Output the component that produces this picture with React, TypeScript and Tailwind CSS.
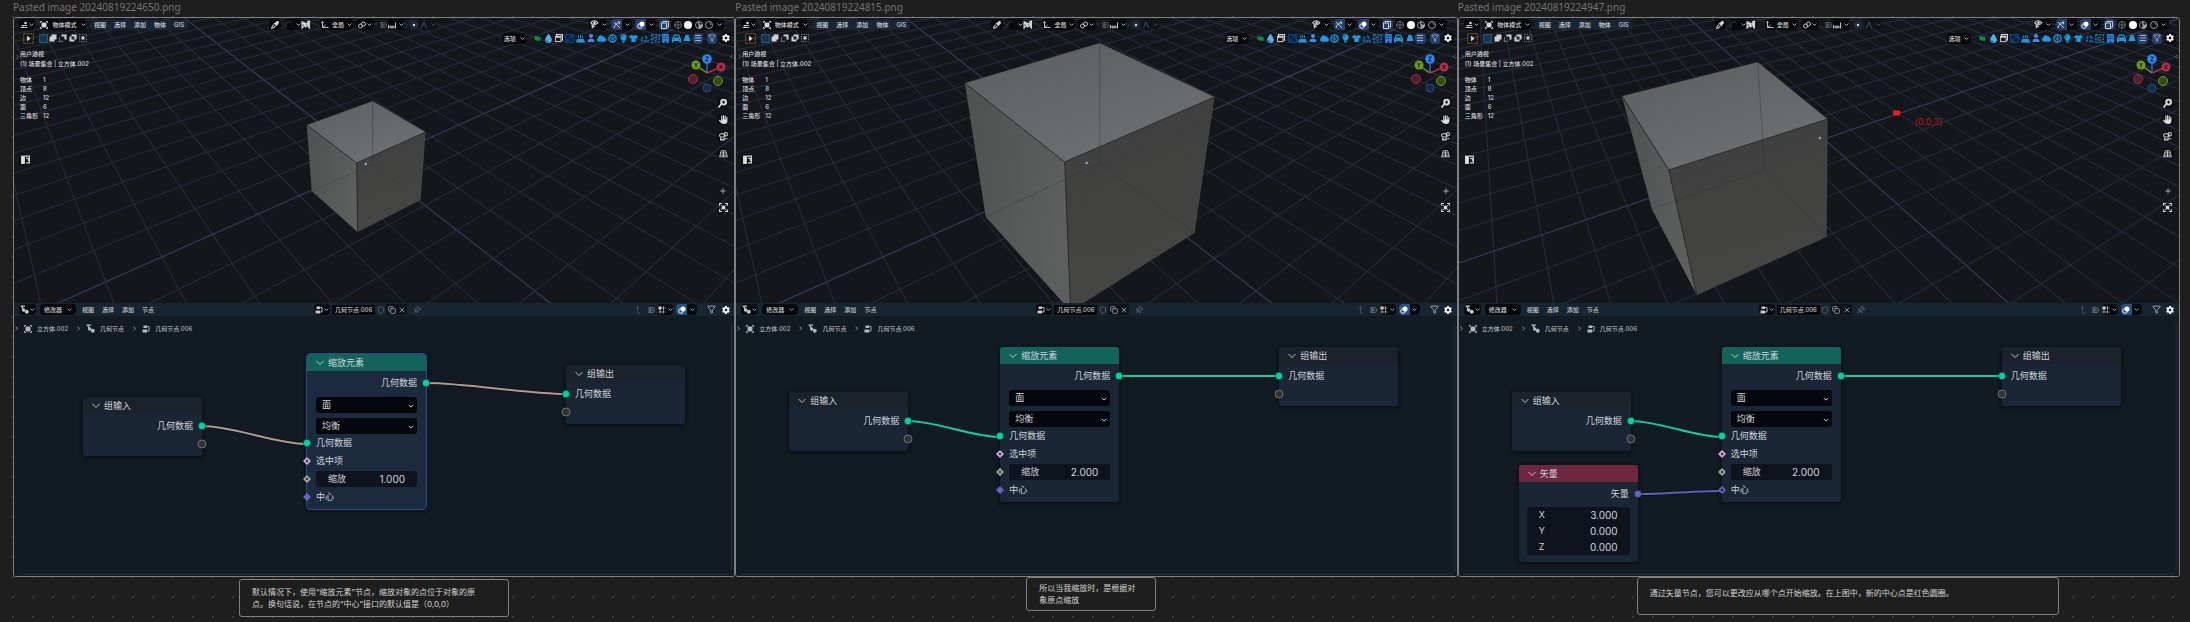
import type { ReactNode } from "react";
import {
  FaBuilding,
  FaCar,
  FaCloud,
  FaDroplet,
  FaEyeDropper,
  FaGear,
  FaHand,
  FaLightbulb,
  FaShirt,
  FaUser,
} from "react-icons/fa6";
import { Magnet, Pin, Shield, Filter, Copy, X, Plus } from "lucide-react";

type Pt = [number, number];

/* ---------- small shared pieces ---------- */

function Svg({ children, className = "size-2" }: { children: ReactNode; className?: string }) {
  return (
    <svg viewBox="0 0 16 16" className={className} fill="none" stroke="currentColor" strokeWidth="1.8" aria-hidden>
      {children}
    </svg>
  );
}

function Chevron({ className = "size-[5px]" }: { className?: string }) {
  return (
    <Svg className={className}>
      <path d="M2 5l6 6 6-6" strokeWidth="2.6" />
    </Svg>
  );
}

function Btn({ label, className = "", children }: { label: string; className?: string; children: ReactNode }) {
  return (
    <button type="button" aria-label={label} className={`flex h-[11px] shrink-0 items-center justify-center ${className}`}>
      {children}
    </button>
  );
}

const ObjectIcon = () => (
  <Svg>
    <rect x="4" y="4" width="8" height="8" fill="currentColor" />
    <path d="M1 4V1h3M12 1h3v3M15 12v3h-3M4 15H1v-3" />
  </Svg>
);
const ViewportIcon = () => (
  <Svg>
    <path d="M1 13h14M3 9h11M5 14l2-6" />
    <circle cx="11" cy="4" r="2.6" fill="currentColor" stroke="none" />
  </Svg>
);
const ModifierIcon = () => (
  <Svg className="size-[9px]">
    <path d="M1 2h8M3 2l3 6" strokeWidth="2.4" />
    <circle cx="6.500" cy="9" r="2.200" fill="currentColor" />
    <circle cx="12" cy="12" r="3.500" fill="currentColor" stroke="none" />
  </Svg>
);
const NodeTreeIcon = () => (
  <Svg>
    <rect x="3" y="1" width="7" height="5" fill="currentColor" stroke="none" />
    <rect x="1" y="9" width="9" height="6" fill="currentColor" stroke="none" />
    <path d="M10 3h4v9h-4" />
  </Svg>
);
const OverlayIcon = () => (
  <Svg>
    <circle cx="6" cy="10" r="4.600" />
    <circle cx="10" cy="6" r="5" fill="currentColor" stroke="none" />
  </Svg>
);
const GridSnapIcon = () => (
  <Svg>
    <path d="M1 4h14M1 12h14M4 1v14M11 1v14" strokeDasharray="3 1" />
    <rect x="1" y="1" width="6" height="6" fill="currentColor" stroke="none" />
  </Svg>
);

/* ---------- 3D viewport ---------- */

type Scene = {
  x: number;
  grid: { a0: number; da: number; va: number; b0: number; db: number; vb: number };
  top: Pt[];
  left: Pt[];
  right: Pt[];
  hidden: Pt;
  dot: Pt;
  marker?: Pt;
};

const HORIZON = -178;
const FLOOR = 304;
const pts = (p: Pt[]) => p.map((q) => q.join(",")).join(" ");

function SceneDrawing({ scene, id }: { scene: Scene; id: string }) {
  const { a0, da, va, b0, db, vb } = scene.grid;
  const [l, back, r, front] = scene.top;
  const steps = Array.from({ length: 49 }, (_, i) => i - 24);
  return (
    <svg
      viewBox={`${scene.x} 18 721 285`}
      preserveAspectRatio="none"
      className="absolute inset-0 size-full"
      aria-hidden
    >
      <defs>
        <linearGradient id={`top-${id}`} x1="0" y1="0" x2="0.6" y2="1">
          <stop offset="0" stopColor="#606162" />
          <stop offset="1" stopColor="#727375" />
        </linearGradient>
        <linearGradient id={`left-${id}`} x1="0" y1="0" x2="1" y2="0.3">
          <stop offset="0" stopColor="#525453" />
          <stop offset="1" stopColor="#606261" />
        </linearGradient>
        <linearGradient id={`right-${id}`} x1="0" y1="0" x2="0.3" y2="1">
          <stop offset="0" stopColor="#414141" />
          <stop offset="1" stopColor="#484847" />
        </linearGradient>
      </defs>
      <g fill="none">
        {steps.map((k) => (
          <line key={`a${k}`} x1={a0 + da * k} y1={FLOOR} x2={va} y2={HORIZON} stroke={k === 0 ? "#363c5a" : "#262b3a"} strokeWidth="1.2" />
        ))}
        {steps.map((k) => (
          <line key={`b${k}`} x1={b0 + db * k} y1={FLOOR} x2={vb} y2={HORIZON} stroke={k === 0 ? "#363c5a" : "#262b3a"} strokeWidth="1.2" />
        ))}
      </g>
      <g opacity=".97">
        <polygon points={pts(scene.left)} fill={`url(#left-${id})`} />
        <polygon points={pts(scene.right)} fill={`url(#right-${id})`} />
        <polygon points={pts(scene.top)} fill={`url(#top-${id})`} />
      </g>
      <g stroke="#2a2b2c" strokeWidth="1" fill="none">
        <path d={`M${l} L${front} L${r}`} />
        <path d={`M${front} L${scene.left[2]}`} />
        <path d={`M${l} L${back} L${r}`} opacity=".35" />
        <path d={`M${back} L${scene.hidden} L${scene.left[3]} M${scene.hidden} L${scene.right[2]}`} opacity=".35" />
      </g>
      <circle cx={scene.dot[0]} cy={scene.dot[1]} r="1.200" fill="#78b4cc" />
      {scene.marker && (
        <rect x={scene.marker[0] - 3.5} y={scene.marker[1] - 2.5} width="7" height="5" rx="1" fill="#f51a12" />
      )}
    </svg>
  );
}

function ViewportToolbar() {
  return (
    <div className="relative flex h-[13px] items-center pl-[5px] pr-[10px] text-[#d4d6d9]">
      <Btn label="编辑器类型" className="w-4 gap-px rounded-sm bg-[#07090c]">
        <ViewportIcon />
        <Chevron />
      </Btn>
      <Btn label="物体模式" className="ml-[5px] w-[46px] gap-1 rounded-sm bg-[#07090c]">
        <ObjectIcon />
        物体模式
        <Chevron />
      </Btn>
      <nav className="ml-1 flex h-[10px] items-center gap-2 rounded-sm bg-[#182634] px-1">
        {["视图", "选择", "添加", "物体", "GIS"].map((m) => (
          <button type="button" key={m}>{m}</button>
        ))}
      </nav>
      <div className="ml-[81px] flex items-center">
        <Btn label="吸管" className="w-3 rounded-sm bg-[#07090c]">
          <FaEyeDropper className="size-2" />
        </Btn>
        <Btn label="曲线" className="ml-1 w-4 gap-1 rounded-sm bg-[#07090c]">
          <Svg className="size-[7px] text-[#4c5058]"><path d="M2 15V7q0-5 5-5h7" /></Svg>
          <Chevron />
        </Btn>
        <Btn label="噪波" className="w-[9px]">
          <Svg className="size-[9px]"><path d="M2 2v12l4-4M2 3l6 9 4-3V3l3-1v12l-3-3" strokeWidth="2.200" /><path d="M2 2l6 10 3-6 4 8V2l-4 4z" fill="currentColor" stroke="none" /></Svg>
        </Btn>
        <Btn label="变换坐标系" className="ml-[10px] w-[33px] gap-[3px] rounded-sm bg-[#07090c]">
          <Svg><path d="M3 1v12h12M3 13l6-5M1 4l2-3 2 3" /></Svg>
          全局
          <Chevron />
        </Btn>
        <Btn label="轴心点" className="ml-[3px] w-[18px] gap-px rounded-sm bg-[#07090c]">
          <Svg><circle cx="5" cy="10" r="4" /><circle cx="11" cy="6" r="4" /></Svg>
          <Chevron />
        </Btn>
        <Btn label="吸附" className="ml-1 w-[10px] rounded-sm bg-[#15171d] text-[#70747f]">
          <Magnet className="size-2 rotate-45" />
        </Btn>
        <Btn label="吸附至" className="w-4 gap-[3px] bg-[#07090c]">
          <Svg><path d="M1 12h14M1 8v7M6 9v6M10 9v6M15 3v12" /></Svg>
          <Chevron />
        </Btn>
        <Btn label="衰减编辑" className="ml-1 w-[11px] rounded-sm bg-[#161d2b]">
          <Svg className="size-2 text-[#4a5270]"><circle cx="8" cy="8" r="6" strokeWidth="1" /><circle cx="8" cy="8" r="2.500" fill="#d8d8d8" stroke="none" /></Svg>
        </Btn>
        <Btn label="衰减类型" className="w-[18px] gap-[3px] rounded-sm bg-[#101318] text-[#565a63]">
          <Svg><path d="M1 14C6 14 6 2 8 2s2 12 7 12" /></Svg>
          <Chevron />
        </Btn>
      </div>
      <div className="ml-auto flex items-center">
        <Btn label="可选性" className="w-[18px] gap-[3px] rounded-sm bg-[#07090c]">
          <Svg className="size-[9px]"><path d="M1 5c4-5 9-5 13 0-3 3-6 4-8 3z" /><circle cx="8" cy="5" r="2.500" fill="currentColor" stroke="none" /><path d="M3 8l1 7 2-3 3 0z" fill="currentColor" strokeWidth="1" /></Svg>
          <Chevron />
        </Btn>
        <Btn label="显示操纵器" className="ml-1 w-[11px] rounded-l-sm bg-[#24406b]">
          <Svg><path d="M2 2l12 12M2 14C3 7 8 3 14 3M10 1l4 2-2 4" /></Svg>
        </Btn>
        <Btn label="操纵器选项" className="w-[10px] rounded-r-sm bg-[#07090c]"><Chevron /></Btn>
        <Btn label="显示叠加层" className="ml-[3px] w-[11px] rounded-l-sm bg-[#24406b] text-white"><OverlayIcon /></Btn>
        <Btn label="叠加层选项" className="w-[10px] rounded-r-sm bg-[#07090c]"><Chevron /></Btn>
        <Btn label="透视模式" className="ml-[3px] w-[11px] rounded-sm bg-[#24406b]">
          <Svg><rect x="1" y="4" width="10" height="11" /><path d="M4 4V1h11v11h-4" /></Svg>
        </Btn>
        <div className="ml-[2px] flex rounded-sm bg-[#07090c]">
          <Btn label="线框" className="w-[11px]"><Svg className="size-2 text-[#96999d]"><circle cx="8" cy="8" r="7" strokeWidth="1.300" /><path d="M1 8h14M8 1v14" strokeWidth="1.300" /></Svg></Btn>
          <Btn label="实体" className="w-[10px]"><Svg><circle cx="8" cy="8" r="8" fill="#fff" stroke="none" /></Svg></Btn>
          <Btn label="材质预览" className="w-[11px]"><Svg className="size-2 text-[#a2a4a8]"><circle cx="8" cy="8" r="7" /><path d="M8 1a7 7 0 000 7zM8 8h7a7 7 0 01-7 7z" fill="currentColor" /></Svg></Btn>
          <Btn label="渲染" className="w-[10px]"><Svg className="size-2 text-[#a2a4a8]"><circle cx="8" cy="8" r="7" /><path d="M9 4q3 1 3 4" /></Svg></Btn>
          <Btn label="着色选项" className="w-[10px]"><Chevron /></Btn>
        </div>
      </div>
    </div>
  );
}

function ToolSettings() {
  return (
    <div className="relative flex h-[14px] items-center pl-2 pr-[3px] text-[#cfd1d4]">
      <Btn label="框选工具" className="w-3 text-[#b4781c]">
        <Svg className="size-[11px]">
          <rect x="1" y="1" width="14" height="14" strokeDasharray="2 1.5" strokeWidth="1.300" />
          <path d="M6 4l5 4-5 4z" fill="#e8e8e8" stroke="none" />
        </Svg>
      </Btn>
      <div className="ml-1 flex">
        <Btn label="新建选区" className="w-[10px]"><Svg className="size-[9px] text-[#2f7fb4]"><rect x="1" y="1" width="14" height="14" fill="#173553" strokeDasharray="2 1.500" /></Svg></Btn>
        <Btn label="扩展选区" className="w-[10px]"><Svg><path d="M1 5h4V1h10v10h-4v4H1z" fill="currentColor" stroke="none" /></Svg></Btn>
        <Btn label="减去选区" className="w-[10px]"><Svg><path d="M5 1h10v10h-4V5H5z" fill="currentColor" stroke="none" /><path d="M1 7v8h8" strokeDasharray="2 2" /></Svg></Btn>
        <Btn label="反转选区" className="w-[10px]"><Svg><path d="M1 5h4V1h10v10h-4v4H1zM5 5v6h6V5z" fill="currentColor" fillRule="evenodd" stroke="none" /></Svg></Btn>
        <Btn label="相交选区" className="w-[10px]"><Svg><rect x="1" y="1" width="14" height="14" strokeDasharray="2 2.600" strokeWidth="1.200" /><rect x="5" y="5" width="6" height="6" fill="currentColor" stroke="none" /></Svg></Btn>
      </div>
      <Btn label="选项" className="ml-auto w-6 gap-1 rounded-sm bg-[#07090c]">
        选项
        <Chevron />
      </Btn>
      <div className="ml-[6px] flex w-[171px] text-[#1a9be6]">
        <Btn label="标记" className="flex-1"><Svg className="size-[7px]"><path d="M1 3l5 0 9 2v8H7L1 10z" fill="#0d8a43" stroke="none" /></Svg></Btn>
        <Btn label="流体" className="flex-1"><FaDroplet className="size-[9px] text-[#4cb4f0]" /></Btn>
        <Btn label="窗口" className="flex-1"><Svg className="size-2 text-[#d6d6d6]"><rect x="1" y="5" width="11" height="10" /><path d="M3 4V1h12v11h-2M1 6h11" strokeWidth="2.600" /></Svg></Btn>
        <Btn label="阵列" className="flex-1"><Svg className="size-[9px] text-[#0c4a8c]"><rect x="1" y="1" width="14" height="14" fill="#06203c" /><path d="M8 1h7v7H8zM1 8h7v7H1z" fill="#0b3768" stroke="none" /></Svg></Btn>
        <Btn label="喷泉" className="flex-1"><Svg className="size-[9px]"><path d="M1 14l2-4h10l2 4zM4 7l1-4M8 7V2M12 7l-1-4" fill="currentColor" /></Svg></Btn>
        <Btn label="角色" className="flex-1"><FaUser className="size-2 text-[#3d90f0]" /></Btn>
        <Btn label="云" className="flex-1"><FaCloud className="size-[9px]" /></Btn>
        <Btn label="胶片" className="flex-1"><Svg className="size-[9px]"><circle cx="8" cy="8" r="6.500" strokeWidth="2.200" /><path d="M8 8l6-3M8 8L2 5M8 8v7M8 8l5 4M8 8l-5 4M8 1v7" strokeWidth="1.300" /></Svg></Btn>
        <Btn label="灯光" className="flex-1"><FaLightbulb className="size-[9px]" /></Btn>
        <Btn label="布料" className="flex-1"><FaShirt className="size-[9px]" /></Btn>
        <Btn label="粒子" className="flex-1"><Svg className="size-[9px] text-[#1673cc]"><path d="M2 14l3-4M8 15l3-5M3 5l3 3M9 3l4 5M13 12l2 3M1 9l1-1" strokeWidth="2.600" /></Svg></Btn>
        <Btn label="区域" className="flex-1"><Svg className="size-[9px]"><rect x="1.500" y="1.500" width="13" height="13" strokeDasharray="4 2" /><path d="M5 10V6h6M5 11h5V8" strokeWidth="1.300" /></Svg></Btn>
        <Btn label="建筑" className="flex-1"><FaBuilding className="size-[9px] text-[#1a8bf0]" /></Btn>
        <Btn label="车辆" className="flex-1"><FaCar className="size-[9px]" /></Btn>
        <Btn label="锥体" className="flex-1"><Svg className="size-2"><path d="M5 2h6l4 12H1z" fill="currentColor" stroke="none" /></Svg></Btn>
        <Btn label="列表" className="flex-1 rounded-sm bg-[#24406b] text-[#a9bfdf]"><Svg><path d="M2 3h12M2 8h12M2 13h12" /></Svg></Btn>
      </div>
      <Btn label="筛选" className="ml-1 w-[10px] rounded-sm bg-[#24406b] text-[#b9cbe6]"><Filter className="size-2" /></Btn>
      <Btn label="设置" className="ml-[3px] w-[11px] rounded-sm bg-[#07090c] text-[#f0f0f0]"><FaGear className="size-2" /></Btn>
    </div>
  );
}

function Gizmo() {
  return (
    <svg viewBox="0 0 40 40" className="mr-[2px] size-10" aria-hidden>
      <g strokeWidth="1.400">
        <path d="M20 20V7" stroke="#2a6fc0" />
        <path d="M20 20L9 12" stroke="#6a9a18" />
        <path d="M20 20L34 14" stroke="#b0304c" />
      </g>
      <circle cx="6" cy="26" r="4.500" fill="#561e2c" stroke="#a22d45" />
      <circle cx="31" cy="28" r="4.500" fill="#314b16" stroke="#6b9c1b" />
      <circle cx="20" cy="35" r="4" fill="#162c4a" stroke="#1f4c84" />
      <circle cx="20" cy="6" r="4.800" fill="#2f86ee" />
      <circle cx="9" cy="12" r="4.500" fill="#6a9a18" />
      <circle cx="34" cy="14" r="4.500" fill="#b42c46" />
      <g fill="none" stroke="#0d1420" strokeWidth=".9">
        <path d="M18.500 4h3l-3 4h3" />
        <path d="M7.500 10l1.500 2 1.500-2M9 12v2.500" />
        <path d="M32.500 12l3 4M35.500 12l-3 4" />
      </g>
    </svg>
  );
}

const STATS: [string, string][] = [
  ["物体", "1"],
  ["顶点", "8"],
  ["边", "12"],
  ["面", "6"],
  ["三角形", "12"],
];

function Viewport({ scene, id }: { scene: Scene; id: string }) {
  return (
    <section className="relative h-[285px] shrink-0 overflow-hidden bg-[#13161b]">
      <SceneDrawing scene={scene} id={id} />
      <ViewportToolbar />
      <ToolSettings />
      <div className="relative flex justify-between pl-[6px] pr-[5px] pt-1">
        <div className="text-[#dcdddf]">
          <p className="leading-[10px]">用户透视</p>
          <p className="leading-[10px]">(1) 场景集合 | 立方体.002</p>
          <table className="mt-[6px]">
            <tbody>
              {STATS.map(([k, v]) => (
                <tr key={k} className="leading-[9px]">
                  <th scope="row" className="w-[23px] text-left font-medium">{k}</th>
                  <td>{v}</td>
                </tr>
              ))}
            </tbody>
          </table>
          <Btn label="面板" className="mt-[34px] w-[10px] rounded-sm bg-[#090b0e]">
            <Svg className="size-[9px]"><rect x="1" y="2" width="5" height="13" fill="currentColor" /><path d="M7 2h8v12H9M9 6h4v5" /></Svg>
          </Btn>
        </div>
        <div className="flex flex-col items-end pt-[4px] text-[#dddddd]">
          <Gizmo />
          <div className="flex w-3 flex-col items-center gap-[6px] pt-1">
            <Btn label="缩放视图" className="w-3 rounded-full bg-[#0b0d11]"><Svg className="size-[10px]"><circle cx="9" cy="6.500" r="5.500" fill="currentColor" stroke="none" /><path d="M5 10l-4 5" strokeWidth="2.600" /><path d="M9 4v5M6.500 6.500h5" stroke="#14171c" /></Svg></Btn>
            <Btn label="移动视图" className="w-3 rounded-full bg-[#0b0d11]"><FaHand className="size-[9px]" /></Btn>
            <Btn label="相机视图" className="w-3 rounded-full bg-[#0b0d11]"><Svg className="size-[9px]"><rect x="1" y="3" width="10" height="6" rx="3" /><circle cx="12" cy="4" r="3" /><path d="M3 10v4h6v-4M11 12h4" strokeWidth="2.200" /></Svg></Btn>
            <Btn label="正交视图" className="w-3 rounded-full bg-[#0b0d11]"><Svg className="size-[9px]"><path d="M4 3h8l3 11H1zM3 7h10M8 3v11M2 11h12" strokeWidth="1.400" /></Svg></Btn>
            <Btn label="添加视图" className="mt-5 w-3"><Plus className="size-2" /></Btn>
            <Btn label="框显全部" className="w-3"><Svg className="size-[9px]"><path d="M1 5V1h4M11 1h4v4M15 11v4h-4M5 15H1v-4" /><path d="M3 3l3 3M13 3l-3 3M3 13l3-3M13 13l-3-3" strokeWidth="1.200" /><rect x="5" y="5" width="6" height="6" fill="currentColor" stroke="none" /></Svg></Btn>
          </div>
        </div>
      </div>
      <Svg className="absolute left-px top-9 size-[5px] text-[#a0a0a0]"><path d="M5 2l6 6-6 6" /></Svg>
      <Svg className="absolute right-0 top-9 size-[5px] text-[#a0a0a0]"><path d="M11 2L5 8l6 6" /></Svg>
      {scene.marker && (
        <p className="absolute left-[456px] top-[97px] text-[9px] leading-[14px] font-normal text-[#b51d1a]">(0,0,3)</p>
      )}
    </section>
  );
}

/* ---------- node editor ---------- */

type SocketKind = "geo" | "empty" | "bool" | "float" | "vector" | "vectorField" | "vectorOut";

function Socket({ kind, side }: { kind: SocketKind; side: "left" | "right" }) {
  const pos = side === "left" ? "-left-[5px]" : "-right-[5px]";
  return (
    <svg viewBox="0 0 10 10" className={`absolute top-1/2 size-[10px] -translate-y-1/2 ${pos}`} aria-hidden>
      {kind === "geo" && <circle cx="5" cy="5" r="3.700" fill="#00d6a3" stroke="#0b2b2a" strokeWidth=".6" />}
      {kind === "empty" && <circle cx="5" cy="5" r="4" fill="#333332" stroke="#6e6e6e" />}
      {kind === "vectorOut" && <circle cx="5" cy="5" r="3.700" fill="#6363c7" stroke="#16182c" strokeWidth=".6" />}
      {kind === "vector" && <path d="M5 1l4 4-4 4-4-4z" fill="#6363c7" />}
      {kind === "vectorField" && <><path d="M5 1l4 4-4 4-4-4z" fill="#6363c7" /><circle cx="5" cy="5" r="1.200" fill="#17172c" /></>}
      {kind === "bool" && <><path d="M5 1l4 4-4 4-4-4z" fill="#cca6d6" /><circle cx="5" cy="5" r="1.200" fill="#3b2a40" /></>}
      {kind === "float" && <><path d="M5 1l4 4-4 4-4-4z" fill="#a1a1a1" /><circle cx="5" cy="5" r="1.200" fill="#333333" /></>}
    </svg>
  );
}

function Row({ kind, side = "left", children }: { kind: SocketKind; side?: "left" | "right"; children?: ReactNode }) {
  return (
    <div className={`relative flex h-[18px] items-center px-[9px] ${side === "right" ? "justify-end" : ""}`}>
      <Socket kind={kind} side={side} />
      {children}
    </div>
  );
}

function NodeCard({ at, title, head, selected, children }: { at: Pt; title: string; head: string; selected?: boolean; children: ReactNode }) {
  return (
    <article
      style={{ left: at[0], top: at[1] }}
      className={`absolute w-[119px] rounded-[3px] text-[9px] leading-[14px] font-normal text-[#d2d6db] shadow-[0_1px_4px_1px_rgba(4,8,12,0.7)] ${
        selected ? "bg-[#1c2a3e] outline outline-[#2c4a8c]" : "bg-[#1a2635]"
      }`}
    >
      <header className={`flex h-[17px] items-center gap-1 rounded-t-[3px] pl-[9px] ${head}`}>
        <Svg className="size-2"><path d="M1 4l7 7 7-7" /></Svg>
        <h3>{title}</h3>
      </header>
      <div className="pt-[3px]">{children}</div>
    </article>
  );
}

function Pick({ label, value }: { label: string; value: string }) {
  return (
    <div className="relative mx-[9px] mt-[5px] first:mt-0">
      <select aria-label={label} defaultValue={value} className="block h-4 w-full appearance-none rounded-[3px] bg-[#04070b] pl-[6px] text-[#d5d8dc]">
        <option>{value}</option>
      </select>
      <Chevron className="pointer-events-none absolute right-[3px] top-[6px] size-[6px]" />
    </div>
  );
}

function NumField({ label, value, className = "" }: { label: string; value: string; className?: string }) {
  return (
    <label className={`flex h-4 w-full items-center justify-between bg-[#0f131e] px-3 ${className}`}>
      <span>{label}</span>
      <input type="text" defaultValue={value} className="w-10 bg-transparent text-right text-[10px]" />
    </label>
  );
}

function GroupInput({ at }: { at: Pt }) {
  return (
    <NodeCard at={at} title="组输入" head="bg-[#1c222b]">
      <Row kind="geo" side="right">几何数据</Row>
      <Row kind="empty" side="right" />
      <div className="h-[3px]" />
    </NodeCard>
  );
}

function GroupOutput({ at }: { at: Pt }) {
  return (
    <NodeCard at={at} title="组输出" head="bg-[#1c222b]">
      <Row kind="geo">几何数据</Row>
      <Row kind="empty" />
      <div className="h-[3px]" />
    </NodeCard>
  );
}

function ScaleElements({ at, value, selected, linked }: { at: Pt; value: string; selected?: boolean; linked?: boolean }) {
  return (
    <NodeCard at={at} title="缩放元素" head="bg-[#12645b]" selected={selected}>
      <Row kind="geo" side="right">几何数据</Row>
      <div className="pt-[5px]">
        <Pick label="域" value="面" />
        <Pick label="缩放模式" value="均衡" />
      </div>
      <Row kind="geo">几何数据</Row>
      <Row kind="bool">选中项</Row>
      <Row kind="float"><NumField label="缩放" value={value} className="rounded-[3px]" /></Row>
      <Row kind={linked ? "vectorField" : "vector"}>中心</Row>
      <div className="h-[3px]" />
    </NodeCard>
  );
}

function VectorNode({ at }: { at: Pt }) {
  return (
    <NodeCard at={at} title="矢量" head="bg-[#6d273f]">
      <Row kind="vectorOut" side="right">矢量</Row>
      <div className="mx-2 mt-1 overflow-hidden rounded-[3px]">
        <NumField label="X" value="3.000" />
        <NumField label="Y" value="0.000" />
        <NumField label="Z" value="0.000" />
      </div>
      <div className="h-[7px]" />
    </NodeCard>
  );
}

type Link = { from: Pt; to: Pt; color: string };

function Links({ links }: { links: Link[] }) {
  return (
    <svg className="absolute inset-0 size-full" aria-hidden>
      {links.map(({ from, to, color }) => {
        const d = (to[0] - from[0]) * 0.3;
        const path = `M${from[0]} ${from[1]} C${from[0] + d} ${from[1]} ${to[0] - d} ${to[1]} ${to[0]} ${to[1]}`;
        return (
          <g key={path} fill="none">
            <path d={path} stroke="#0a0f14" strokeWidth="3.500" />
            <path d={path} stroke={color} strokeWidth="1.900" />
          </g>
        );
      })}
    </svg>
  );
}

function NodeHeader() {
  return (
    <div className="flex h-[13px] shrink-0 items-center bg-[#172530] pl-[5px] pr-[3px] text-[#c6cace]">
      <Btn label="编辑器类型" className="w-[17px] gap-px rounded-sm bg-[#07090c]"><ModifierIcon /><Chevron /></Btn>
      <Btn label="节点树类型" className="ml-1 w-9 rounded-sm bg-[#07090c] px-1">
        <span className="flex-1 text-left">修改器</span>
        <Chevron />
      </Btn>
      <nav className="ml-[6px] flex gap-2">
        {["视图", "选择", "添加", "节点"].map((m) => (
          <button type="button" key={m}>{m}</button>
        ))}
      </nav>
      <Btn label="浏览节点树" className="ml-40 w-4 gap-px rounded-sm bg-[#07090c]"><NodeTreeIcon /><Chevron /></Btn>
      <input aria-label="节点树名称" defaultValue="几何节点.006" className="ml-[2px] h-[10px] w-[43px] bg-[#07090c] pl-[3px]" />
      <Btn label="伪用户" className="w-[11px] text-[#6f7883]"><Shield className="size-2" /></Btn>
      <Btn label="复制" className="w-[11px] bg-[#0e141a]"><Copy className="size-2" /></Btn>
      <Btn label="断开" className="w-[10px] bg-[#0e141a]"><X className="size-2" /></Btn>
      <Btn label="固定" className="ml-1 w-[11px] text-[#7f8893]"><Pin className="size-2 rotate-45" /></Btn>
      <div className="ml-auto flex items-center">
        <Btn label="上级" className="w-3 text-[#46525c]"><Svg><path d="M4 5l3-4 3 4M7 1v13h5" /></Svg></Btn>
        <Btn label="吸附" className="w-[13px] text-[#7a848e]"><Magnet className="size-2 rotate-45" /></Btn>
        <Btn label="吸附至" className="w-4 gap-[2px] rounded-sm bg-[#07090c]"><GridSnapIcon /><Chevron /></Btn>
        <Btn label="显示叠加层" className="ml-[3px] w-[11px] rounded-l-sm bg-[#24508a] text-white"><OverlayIcon /></Btn>
        <Btn label="叠加层选项" className="w-[10px] rounded-r-sm bg-[#07090c]"><Chevron /></Btn>
        <Btn label="筛选" className="ml-[9px] w-[11px] text-[#c2cad2]"><Filter className="size-[9px]" /></Btn>
        <Btn label="设置" className="ml-[3px] w-[11px] text-[#f0f0f0]"><FaGear className="size-2" /></Btn>
      </div>
    </div>
  );
}

function Crumb({ children, icon }: { children: ReactNode; icon: ReactNode }) {
  return (
    <li className="flex items-center gap-[5px]">
      <Svg className="size-[5px]"><path d="M5 2l6 6-6 6" strokeWidth="2.400" /></Svg>
      {icon}
      {children}
    </li>
  );
}

function NodeEditor({ children, links }: { children: ReactNode; links: Link[] }) {
  return (
    <section className="relative flex min-h-0 flex-1 flex-col bg-[#131b22]">
      <NodeHeader />
      <ol className="flex items-center gap-2 pt-2 text-[#b3b8bd]">
        <Crumb icon={<ObjectIcon />}>立方体.002</Crumb>
        <Crumb icon={<ModifierIcon />}>几何节点</Crumb>
        <Crumb icon={<NodeTreeIcon />}>几何节点.006</Crumb>
      </ol>
      <div className="absolute inset-0">
        <Links links={links} />
        {children}
      </div>
      <div className="absolute bottom-1 right-px top-5 w-[3px] rounded-full bg-[#1a232f]" />
      <div className="absolute inset-x-1 bottom-px h-[2px] rounded-full bg-[#1a2734]" />
    </section>
  );
}

/* ---------- page ---------- */

const scenes: Scene[] = [
  {
    x: 14,
    grid: { a0: 552, da: 73, va: -67, b0: 56, db: 92.5, vb: 1141 },
    top: [[307, 125], [373, 101], [426, 132], [357, 163]],
    left: [[307, 125], [357, 163], [358, 232], [312, 191]],
    right: [[357, 163], [426, 132], [421, 200], [358, 232]],
    hidden: [373, 164],
    dot: [366, 164],
  },
  {
    x: 736,
    grid: { a0: 1273, da: 73, va: 654, b0: 777, db: 92.5, vb: 1862 },
    top: [[965, 83], [1100, 43], [1215, 97], [1065, 162]],
    left: [[965, 83], [1065, 162], [1071, 311], [986, 217]],
    right: [[1065, 162], [1215, 97], [1195, 233], [1071, 311]],
    hidden: [1100, 163],
    dot: [1087, 163],
  },
  {
    x: 1459,
    grid: { a0: 2010, da: 57, va: 1468, b0: 1338, db: 112, vb: 2759 },
    top: [[1622, 96], [1758, 62], [1828, 119], [1669, 170]],
    left: [[1622, 96], [1669, 170], [1697, 295], [1652, 209]],
    right: [[1669, 170], [1828, 119], [1827, 237], [1697, 295]],
    hidden: [1765, 170],
    dot: [1820, 138],
    marker: [1897, 113],
  },
];

const GREEN = "#00d6a3";
const TAN = "#b09a92";

function Column({ file, scene, links, nodes, note, noteClass }: { file: string; scene: Scene; links: Link[]; nodes: ReactNode; note: string; noteClass: string }) {
  return (
    <div className="flex min-w-0 flex-col">
      <h2 className="h-[17px] font-['Noto_Sans',sans-serif] text-[10px] leading-[15px] font-normal text-[#757575]">{file}</h2>
      <figure>
        <div className="flex h-[560px] flex-col overflow-hidden rounded-[3px] border border-[#808080]">
          <Viewport scene={scene} id={file.slice(-7, -4)} />
          <NodeEditor links={links}>{nodes}</NodeEditor>
        </div>
        <figcaption className={`rounded-[3px] border border-[#808080] bg-[#1e1e1e] pl-3 text-[8px] leading-3 font-normal text-[#d4d4d4] ${noteClass}`}>
          {note}
        </figcaption>
      </figure>
    </div>
  );
}

export default function App() {
  return (
    <main className="min-h-screen overflow-hidden bg-[#1e1e1e] bg-[radial-gradient(circle,#3a3a3a_1px,transparent_1px)] bg-[length:20px_20px] bg-[position:3px_7px] pl-[13px] pr-[10px] font-[Inter,'Noto_Sans_CJK_SC',sans-serif] text-[6px] leading-[9px] font-medium">
      <div className="grid grid-cols-3">
        <Column
          file="Pasted image 20240819224650.png"
          scene={scenes[0]}
          links={[
            { from: [188, 123], to: [293, 141], color: TAN },
            { from: [412, 80], to: [552, 91], color: TAN },
          ]}
          nodes={
            <>
              <GroupInput at={[69, 94]} />
              <ScaleElements at={[293, 51]} value="1.000" selected />
              <GroupOutput at={[552, 62]} />
            </>
          }
          note="默认情况下，使用“缩放元素”节点，缩放对象的点位于对象的原点。换句话说，在节点的“中心”接口的默认值是（0,0,0）"
          noteClass="ml-[226px] mt-[2px] w-[270px] py-[6px] pr-8"
        />
        <Column
          file="Pasted image 20240819224815.png"
          scene={scenes[1]}
          links={[
            { from: [172, 118], to: [264, 134], color: GREEN },
            { from: [383, 73], to: [543, 73], color: GREEN },
          ]}
          nodes={
            <>
              <GroupInput at={[53, 89]} />
              <ScaleElements at={[264, 44]} value="2.000" />
              <GroupOutput at={[543, 44]} />
            </>
          }
          note="所以当我缩放时，是根据对象原点缩放"
          noteClass="ml-[291px] w-[130px] pb-1 pr-5 pt-1"
        />
        <Column
          file="Pasted image 20240819224947.png"
          scene={scenes[2]}
          links={[
            { from: [172, 118], to: [263, 134], color: GREEN },
            { from: [382, 73], to: [543, 73], color: GREEN },
            { from: [179, 191], to: [263, 188], color: "#5f5fc4" },
          ]}
          nodes={
            <>
              <GroupInput at={[53, 89]} />
              <VectorNode at={[60, 162]} />
              <ScaleElements at={[263, 44]} value="2.000" linked />
              <GroupOutput at={[543, 44]} />
            </>
          }
          note="通过矢量节点，您可以更改应从哪个点开始缩放。在上图中，新的中心点是红色圆圈。"
          noteClass="ml-[179px] w-[422px] pb-[15px] pr-3 pt-[9px]"
        />
      </div>
    </main>
  );
}
